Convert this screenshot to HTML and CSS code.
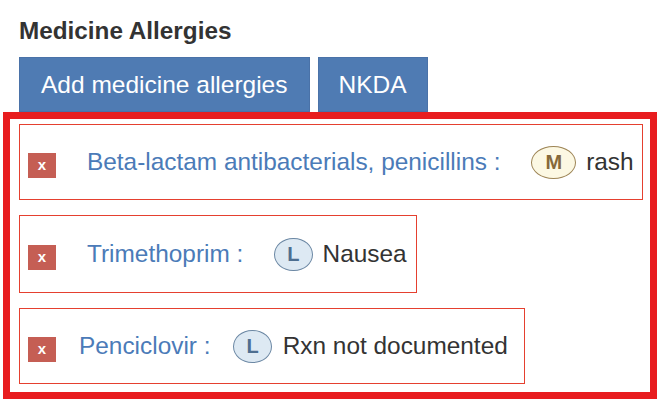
FILE: index.html
```html
<!DOCTYPE html>
<html lang="en">
<head>
<meta charset="utf-8">
<title>Medicine Allergies</title>
<link rel="stylesheet" href="styles.css">
</head>
<body>
  <section class="allergies">
    <h2 class="title">Medicine Allergies</h2>
    <div class="actions">
      <button class="btn">Add medicine allergies</button>
      <button class="btn btn-nkda">NKDA</button>
    </div>
    <div class="list">
      <div class="item">
        <span class="remove">x</span>
        <a class="drug">Beta-lactam antibacterials, penicillins :</a>
        <span class="sev sev-m">M</span>
        <span class="rxn">rash</span>
      </div>
      <div class="item item-tall">
        <span class="remove">x</span>
        <a class="drug">Trimethoprim :</a>
        <span class="sev sev-l">L</span>
        <span class="rxn">Nausea</span>
      </div>
      <div class="item item-compact">
        <span class="remove">x</span>
        <a class="drug">Penciclovir :</a>
        <span class="sev sev-l">L</span>
        <span class="rxn">Rxn not documented</span>
      </div>
    </div>
  </section>
</body>
</html>
```

FILE: styles.css
```css
* { box-sizing: border-box; }

html, body {
  margin: 0;
  padding: 0;
  background: #ffffff;
}

body {
  font-family: "Liberation Sans", Arial, sans-serif;
  color: #333333;
}

.allergies {
  width: 661px;
}

.title {
  margin: 17px 0 0 19px;
  font-size: 24.3px;
  font-weight: bold;
  line-height: 28px;
  color: #333333;
}

.actions {
  display: flex;
  gap: 8px;
  margin: 12px 0 0 19px;
}

.btn {
  height: 55px;
  padding: 0 21px;
  border: 1px solid #4a72a8;
  background: #4f7bb3;
  color: #ffffff;
  font-family: "Liberation Sans", Arial, sans-serif;
  font-size: 24.5px;
  line-height: 53px;
}

.btn-nkda {
  padding: 0 20px;
}

.list {
  display: flex;
  flex-direction: column;
  align-items: flex-start;
  gap: 15px;
  width: 654px;
  margin-left: 3px;
  padding: 5px 0 8px 9px;
  border: 7px solid #e81d1f;
}

.item {
  display: flex;
  align-items: center;
  height: 76px;
  padding: 0 8px 0 8px;
  border: 1px solid #e5402f;
  font-size: 24.4px;
}

.item-tall {
  height: 78px;
  padding-right: 9px;
}

.remove {
  width: 28px;
  height: 25px;
  margin-top: 6px;
  background: #c55e54;
  color: #ffffff;
  font-size: 15px;
  font-weight: bold;
  line-height: 24px;
  text-align: center;
}

.drug {
  margin-left: 31px;
  margin-right: 31px;
  color: #4b7bb8;
  white-space: nowrap;
}

.sev {
  height: 33px;
  padding: 0 12px;
  border: 1px solid;
  border-radius: 50%;
  font-size: 20px;
  font-weight: bold;
  line-height: 31px;
}

.sev-m {
  padding: 0 13px;
  background: #fcf8e3;
  border-color: #9d8455;
  color: #86693a;
}

.sev-l {
  background: #dde9f3;
  border-color: #6c88a4;
  color: #4d6e90;
}

.rxn {
  margin-left: 10px;
  color: #333333;
  white-space: nowrap;
}

.item-compact {
  padding-right: 16px;
}

.item-compact .drug {
  margin-left: 23px;
  margin-right: 23px;
}

.item-compact .rxn {
  margin-left: 11px;
}
```
